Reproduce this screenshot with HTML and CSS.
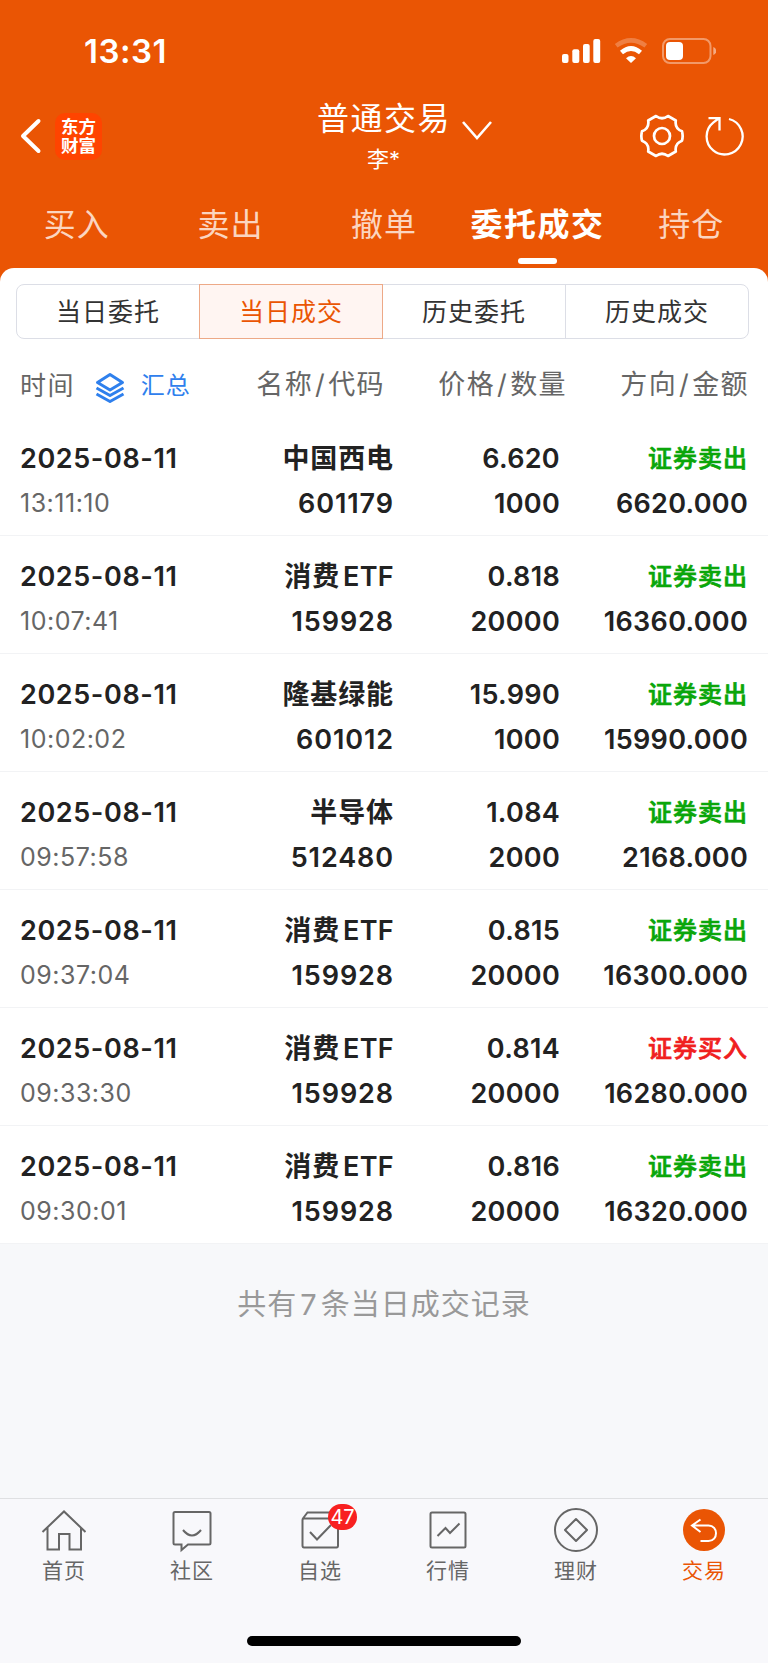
FILE: index.html
```html
<!DOCTYPE html>
<html lang="zh-CN">
<head>
    <meta charset="UTF-8">
    <meta name="viewport" content="width=device-width, initial-scale=1.0">
    <title>普通交易</title>
    <link rel="stylesheet" href="styles.css">
</head>
<body>
    <header>
        <div class="status-bar">
            <span class="clock">13:31</span>
            <svg class="status-icons" width="156" height="28" viewBox="0 0 156 28">
                <g fill="#fff">
                    <rect x="2" y="17" width="6.500" height="9" rx="2"/>
                    <rect x="12.3" y="12.3" width="7" height="13.7" rx="2"/>
                    <rect x="23" y="7" width="6.700" height="19" rx="2"/>
                    <rect x="33.300" y="2" width="6.900" height="24" rx="2"/>
                    <path d="M71 26l-5-4.800q5-4.400 10 0z"/>
                </g>
                <path d="M56.200 8.800q14.800-10.800 29.600 0" fill="none" stroke="#fff" stroke-opacity=".25" stroke-width="4.500"/>
                <path d="M61.500 15.600q9.500-8.200 19 0" fill="none" stroke="#fff" stroke-width="4.600"/>
                <rect x="103" y="2" width="47.500" height="24" rx="7" fill="none" stroke="#fff" stroke-opacity=".4" stroke-width="2"/>
                <rect x="106" y="5" width="17" height="18" rx="4" fill="#fff"/>
                <path d="M153.300 10q3 1.200 3 4t-3 4z" fill="#fff" fill-opacity=".5"/>
            </svg>
        </div>
        <div class="title-bar">
            <div class="side">
                <svg width="22" height="36" viewBox="0 0 22 36"><path d="M18.500 3L3 18L18.500 33" fill="none" stroke="#fff" stroke-width="4" stroke-linecap="round" stroke-linejoin="round"/></svg>
                <div class="logo">东方<br>财富</div>
            </div>
            <div class="account">
                <h1>普通交易</h1>
                <p>李*</p>
                <svg class="arrow" width="32" height="22" viewBox="0 0 32 22"><path d="M2 2L16 18L30 2" fill="none" stroke="#fff" stroke-width="2.600"/></svg>
            </div>
            <div class="side right">
                <svg width="44" height="44" viewBox="0 0 44 44" fill="none" stroke="#fff" stroke-width="2.700" stroke-linejoin="round">
                    <path d="M16 2Q22 6.500 28 2L35.800 6.500Q34.500 14.500 42 17.300Q43.300 22 42 26.700Q34.500 29.500 35.800 37.500L28 42Q22 37.500 16 42L8.200 37.500Q9.500 29.500 2 26.700Q.7 22 2 17.300Q9.500 14.500 8.200 6.500Z"/>
                    <circle cx="22" cy="22" r="8"/>
                </svg>
                <svg width="42" height="42" viewBox="0 0 42 42" fill="none" stroke="#fff" stroke-width="2.300">
                    <path d="M25 4A18 18 0 1 1 9.500 7.300L15 3.300M4.500 3.200H15.500V15.500"/>
                </svg>
            </div>
        </div>
        <nav class="main-tabs">
            <a>买入</a>
            <a>卖出</a>
            <a>撤单</a>
            <a class="active">委托成交</a>
            <a>持仓</a>
        </nav>
    </header>
    <main>
        <div class="sub-tabs">
            <a>当日委托</a>
            <a class="active">当日成交</a>
            <a>历史委托</a>
            <a>历史成交</a>
        </div>
        <div class="list-head">
            <div class="head-time">
                <span>时间</span>
                <svg width="30" height="32" viewBox="0 0 30 32" fill="none" stroke="#2f80ed" stroke-width="3" stroke-linejoin="round">
                    <path d="M15 2.500L27.500 10.500L15 18L2.500 10.500Z"/>
                    <path d="M1.500 16L15 23.500L28.500 16M1.500 22L15 29.500L28.500 22"/>
                </svg>
                <a>汇总</a>
            </div>
            <span>名称<span class="slash">/</span>代码</span>
            <span>价格<span class="slash">/</span>数量</span>
            <span>方向<span class="slash">/</span>金额</span>
        </div>
        <div class="row">
            <div><b>2025-08-11</b><i>13:11:10</i></div>
            <div><b>中国西电</b><b>601179</b></div>
            <div><b>6.620</b><b>1000</b></div>
            <div><b class="sell">证券卖出</b><b>6620.000</b></div>
        </div>
        <div class="row">
            <div><b>2025-08-11</b><i>10:07:41</i></div>
            <div><b>消费<span class="latin">ETF</span></b><b>159928</b></div>
            <div><b>0.818</b><b>20000</b></div>
            <div><b class="sell">证券卖出</b><b>16360.000</b></div>
        </div>
        <div class="row">
            <div><b>2025-08-11</b><i>10:02:02</i></div>
            <div><b>隆基绿能</b><b>601012</b></div>
            <div><b>15.990</b><b>1000</b></div>
            <div><b class="sell">证券卖出</b><b>15990.000</b></div>
        </div>
        <div class="row">
            <div><b>2025-08-11</b><i>09:57:58</i></div>
            <div><b>半导体</b><b>512480</b></div>
            <div><b>1.084</b><b>2000</b></div>
            <div><b class="sell">证券卖出</b><b>2168.000</b></div>
        </div>
        <div class="row">
            <div><b>2025-08-11</b><i>09:37:04</i></div>
            <div><b>消费<span class="latin">ETF</span></b><b>159928</b></div>
            <div><b>0.815</b><b>20000</b></div>
            <div><b class="sell">证券卖出</b><b>16300.000</b></div>
        </div>
        <div class="row">
            <div><b>2025-08-11</b><i>09:33:30</i></div>
            <div><b>消费<span class="latin">ETF</span></b><b>159928</b></div>
            <div><b>0.814</b><b>20000</b></div>
            <div><b class="buy">证券买入</b><b>16280.000</b></div>
        </div>
        <div class="row">
            <div><b>2025-08-11</b><i>09:30:01</i></div>
            <div><b>消费<span class="latin">ETF</span></b><b>159928</b></div>
            <div><b>0.816</b><b>20000</b></div>
            <div><b class="sell">证券卖出</b><b>16320.000</b></div>
        </div>
    </main>
    <p class="summary">共有<span class="count">7</span>条当日成交记录</p>
    <footer>
        <nav class="bottom-nav">
            <a>
                <svg width="46" height="46" viewBox="0 0 46 46"><path d="M1.500 24L23 3.500L44.500 24M6.500 19.500V41.500H18V26H28.500V41.500H40V19.500"/></svg>
                首页
            </a>
            <a>
                <svg width="46" height="46" viewBox="0 0 46 46"><path d="M6 4H40Q41.500 4 41.500 5.500V35Q41.500 36.500 40 36.500H19L12.500 42V36.500H6Q4.500 36.500 4.500 35V5.500Q4.500 4 6 4ZM14 22Q23 33 32 22"/></svg>
                社区
            </a>
            <a>
                <svg width="46" height="46" viewBox="0 0 46 46"><path d="M5.500 11L10.500 4.500H36L41 11M7 10.500H39.500Q41 10.500 41 12V37.500Q41 39.500 39.500 39.500H7Q5.500 39.500 5.500 37.500V12Q5.500 10.500 7 10.500ZM13 24L20 31.500L34 17"/></svg>
                自选
                <em>47</em>
            </a>
            <a>
                <svg width="46" height="46" viewBox="0 0 46 46"><rect x="5.500" y="4.500" width="35" height="35" rx="1.500"/><path d="M12.500 28L20.500 20L25 25L34.500 15.500"/></svg>
                行情
            </a>
            <a>
                <svg width="46" height="46" viewBox="0 0 46 46"><circle cx="23" cy="22" r="21"/><path d="M23 11L34 22L23 33L12 22Z" stroke-linejoin="round"/></svg>
                理财
            </a>
            <a class="active">
                <svg width="46" height="46" viewBox="0 0 46 46"><circle cx="23" cy="22" r="21"/><path d="M19.500 11.500L11 17.500L19.500 24M11 17.500H27.500C37.500 17.500 37.500 33 27.500 33H19.500"/></svg>
                交易
            </a>
        </nav>
        <div class="home-bar"></div>
    </footer>
</body>
</html>
```
FILE: styles.css
```css
* {
    box-sizing: border-box;
}
body {
    margin: 0;
    height: 1663px;
    display: flex;
    flex-direction: column;
    background: #f7f8fa;
    color: #222;
    font-family: Inter, "Noto Sans CJK SC", sans-serif;
}
h1, p {
    margin: 0;
    font-weight: 400;
}
svg {
    flex: none;
    display: block;
}
header {
    height: 288px;
    margin-bottom: -20px;
    background: #ea5504;
    color: #fff;
}
.status-bar {
    height: 100px;
    display: flex;
    justify-content: space-between;
    align-items: center;
    padding: 2px 52px 0 84px;
}
.clock {
    font-size: 33px;
    font-weight: 600;
    letter-spacing: .5px;
}
.title-bar {
    height: 80px;
    display: flex;
    justify-content: space-between;
    align-items: center;
    padding: 0 22px 8px 20px;
}
.side {
    width: 110px;
    display: flex;
    align-items: center;
    gap: 13px;
}
.right {
    justify-content: flex-end;
    gap: 20px;
}
.logo {
    width: 47px;
    height: 47px;
    padding-top: 4px;
    border-radius: 10px;
    background: #ff4400;
    font-size: 17.500px;
    line-height: 19.500px;
    font-weight: 700;
    text-align: center;
}
.account {
    position: relative;
    text-align: center;
}
.account h1 {
    padding-left: 2px;
    font-size: 32px;
    line-height: 42px;
    letter-spacing: 1.500px;
}
.account p {
    padding: 4px 0 0 1px;
    font-size: 22px;
    line-height: 30px;
}
.account .arrow {
    position: absolute;
    left: 146px;
    top: 22px;
}
.main-tabs {
    display: flex;
    height: 88px;
}
.main-tabs a {
    flex: 1;
    position: relative;
    font-size: 32px;
    line-height: 90px;
    letter-spacing: 1px;
    text-align: center;
    color: #fbd5c0;
}
.main-tabs .active {
    color: #fff;
    font-weight: 700;
    letter-spacing: 1.500px;
}
.main-tabs .active::after {
    content: "";
    position: absolute;
    left: 57px;
    bottom: 4px;
    width: 39px;
    height: 6px;
    border-radius: 3px;
    background: #fff;
}
main {
    position: relative;
    height: 975px;
    padding-top: 16px;
    background: #fff;
    border-radius: 14px 14px 0 0;
}
.sub-tabs {
    display: flex;
    height: 55px;
    margin: 0 19px 0 16px;
    border: 1px solid #dcdee6;
    border-radius: 8px;
}
.sub-tabs a {
    flex: 1;
    font-size: 25px;
    line-height: 55px;
    letter-spacing: 1px;
    text-align: center;
    color: #333;
}
.sub-tabs a:last-child {
    border-left: 1px solid #dcdee6;
}
.sub-tabs .active {
    margin: -1px 0;
    border: 1px solid #eda987;
    background: #fff5f2;
    color: #ea5504;
}
.list-head {
    display: grid;
    grid-template-columns: 191px 174px 182px 182px;
    height: 79px;
    padding-left: 20px;
    line-height: 91px;
    font-size: 27px;
    letter-spacing: 1.400px;
    color: #666;
    text-align: right;
}
.slash {
    margin: 0 2px 0 2px;
}
.head-time {
    display: flex;
    align-items: center;
    height: 92px;
}
.head-time span {
    font-size: 26px;
}
.head-time svg {
    margin: 6px 16px 0 20px;
}
.head-time a {
    font-size: 24px;
    letter-spacing: 1px;
    color: #2f80ed;
}
.row {
    display: grid;
    grid-template-columns: 191px 183px 166px 188px;
    height: 118px;
    padding: 18px 0 0 20px;
    border-bottom: 1px solid #f2f3f5;
    text-align: right;
}
.row div:first-child {
    text-align: left;
}
.row b, .row i {
    display: block;
    height: 45px;
    line-height: 45px;
    font-size: 27px;
    font-weight: 600;
    font-style: normal;
    letter-spacing: .5px;
    white-space: nowrap;
}
.row div:first-child b {
    letter-spacing: .6px;
}
.row div:nth-child(2) b {
    letter-spacing: .9px;
}
.row div:nth-child(3) b {
    letter-spacing: .3px;
}
.row div:last-child b {
    letter-spacing: .3px;
}
.row i {
    font-size: 25px;
    font-weight: 400;
    color: #666;
}
.row div:last-child .sell, .row div:last-child .buy {
    font-size: 24px;
    font-weight: 500;
    letter-spacing: 1px;
    color: #0aa60a;
    -webkit-text-stroke: .7px;
}
.row div:last-child .buy {
    color: #f02020;
}
.latin {
    margin-left: 3px;
    letter-spacing: .3px;
}
.summary {
    flex: 1;
    padding-top: 40px;
    line-height: 44px;
    font-size: 29px;
    letter-spacing: 1px;
    text-align: center;
    color: #999;
}
.count {
    margin: 0 3px;
}
footer {
    height: 165px;
    border-top: 1px solid #dfe0e2;
    background: #f8f8fb;
}
.bottom-nav {
    display: flex;
    height: 137px;
    padding-top: 9px;
}
.bottom-nav a {
    flex: 1;
    position: relative;
    display: flex;
    flex-direction: column;
    align-items: center;
    font-size: 21px;
    line-height: 34px;
    letter-spacing: 1px;
    color: #666;
}
.bottom-nav svg {
    fill: none;
    stroke: #666;
    stroke-width: 2;
}
.bottom-nav em {
    position: absolute;
    left: 72px;
    top: -4px;
    width: 29px;
    height: 26px;
    border-radius: 13px;
    background: #f82020;
    color: #fff;
    font-size: 20px;
    line-height: 27px;
    letter-spacing: 0;
    font-style: normal;
    text-align: center;
}
.bottom-nav .active {
    color: #ea5504;
}
.bottom-nav .active circle {
    fill: #ea5504;
    stroke: none;
}
.bottom-nav .active path {
    stroke: #fff;
}
.home-bar {
    width: 274px;
    height: 10px;
    margin: 0 auto;
    border-radius: 5px;
    background: #000;
}
```
